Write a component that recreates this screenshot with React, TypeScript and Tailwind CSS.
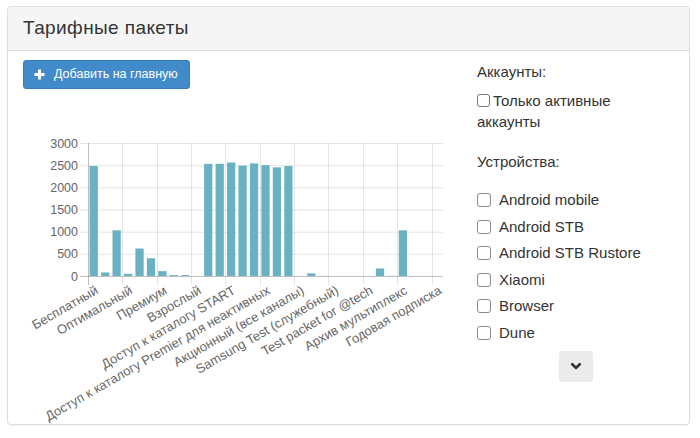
import React from "react";

const values = [
  2480, 80, 1030, 50, 620, 400, 110, 20, 20, 0, 2530, 2530, 2560, 2490, 2540, 2500, 2450, 2480, 0, 60, 3, 0, 0, 0, 0,
  170, 3, 1030, 0, 0, 0,
];

const labels: Record<number, string> = {
  0: "Бесплатный",
  3: "Оптимальный",
  6: "Премиум",
  9: "Взрослый",
  12: "Доступ к каталогу START",
  15: "Доступ к каталогу Premier для неактивных",
  18: "Акционный (все каналы)",
  21: "Samsung Test (служебный)",
  24: "Test packet for @tech",
  27: "Архив мультиплекс",
  30: "Годовая подписка",
};

const devices = ["Android mobile", "Android STB", "Android STB Rustore", "Xiaomi", "Browser", "Dune"];

const font = "'Liberation Sans', Arial, sans-serif";

function Chart() {
  const left = 65;
  const right = 420;
  const top = 54;
  const bottom = 187;
  const step = (right - left) / values.length;
  const y = (v: number) => bottom - (v / 3000) * (bottom - top);

  return (
    <svg width={424} height={320} className="block overflow-visible" style={{ fontFamily: font }}>
      {[0, 500, 1000, 1500, 2000, 2500, 3000].map((v) => (
        <g key={v}>
          <line x1={57} x2={right} y1={y(v) + 0.5} y2={y(v) + 0.5} stroke={v === 0 ? "rgba(0,0,0,0.25)" : "rgba(0,0,0,0.1)"} />
          <text x={55} y={y(v) + 4.5} textAnchor="end" fontSize={12.5} fill="#666">
            {v}
          </text>
        </g>
      ))}
      {Array.from({ length: 11 }).map((_, k) => {
        const x = Math.round(left + step * 3 * k) + 0.5;
        return (
          <line
            key={k}
            x1={x}
            x2={x}
            y1={top}
            y2={bottom + 9}
            stroke={k === 0 ? "rgba(0,0,0,0.25)" : "rgba(0,0,0,0.1)"}
          />
        );
      })}
      {values.map((v, i) => {
        const w = step * 0.72;
        const x = left + step * i + (step - w) / 2;
        if (v <= 0) return null;
        return <rect key={i} x={x} y={y(v)} width={w} height={bottom - y(v)} fill="#69b1c3" />;
      })}
      {Object.entries(labels).map(([k, text]) => {
        const i = Number(k);
        const cx = left + step * (i + 0.5);
        return (
          <text
            key={k}
            transform={`translate(${cx + 3} ${bottom + 13}) rotate(-30)`}
            textAnchor="end"
            dy="0.35em"
            fontSize={13}
            fill="#666"
          >
            {text}
          </text>
        );
      })}
    </svg>
  );
}

function Box() {
  return <span className="inline-block h-[14px] w-[14px] shrink-0 rounded-[3px] border border-[#8a8a8a] bg-white" />;
}

export default function App() {
  return (
    <div className="h-[438px] w-[700px] bg-white pl-[7px] pt-[6px]" style={{ fontFamily: font }}>
      <div className="w-[683px] rounded-[4px] border border-[#ddd] bg-white shadow-[0_1px_1px_rgba(0,0,0,0.05)]">
        <div className="flex h-[44px] items-center rounded-t-[3px] border-b border-[#ddd] bg-[#f5f5f5] px-[15px]">
          <h3 className="text-[19px] tracking-[0.4px] text-[#333]">Тарифные пакеты</h3>
        </div>
        <div className="flex px-[15px] pb-[15px]">
          <div className="w-[439px] pt-[9px]">
            <button className="flex h-[29px] items-center gap-[9px] rounded-[3px] border border-[#357ebd] bg-[#428bca] pl-[10px] pr-[11px] text-[12.5px] text-white">
              <svg width="11" height="11" viewBox="0 0 11 11">
                <path d="M5.5 0.5v10M0.5 5.5h10" stroke="#fff" strokeWidth="3" />
              </svg>
              Добавить на главную
            </button>
            <Chart />
          </div>
          <div className="ml-[15px] flex flex-1 flex-col pt-[11px] text-[15px] leading-[20px] text-[#333]">
            <div>Аккаунты:</div>
            <div className="mt-[8px] leading-[21px]">
              <span className="mr-[3px] inline-block h-[13px] w-[13px] translate-y-[1px] rounded-[3px] border border-[#777] bg-white" />
              Только активные аккаунты
            </div>
            <div className="mt-[20px]">Устройства:</div>
            <div className="mt-[18px] flex flex-col gap-[6.6px]">
              {devices.map((d) => (
                <label key={d} className="flex h-[20px] items-center gap-[8px]">
                  <Box />
                  {d}
                </label>
              ))}
            </div>
            <button className="mx-auto mt-[8px] flex h-[31px] w-[34px] items-center justify-center rounded-[3px] bg-[#ebebeb]">
              <svg width="12" height="8" viewBox="0 0 12 8">
                <path d="M1.5 1.5l4.5 4.5 4.5-4.5" fill="none" stroke="#333" strokeWidth="2.6" />
              </svg>
            </button>
          </div>
        </div>
      </div>
    </div>
  );
}
